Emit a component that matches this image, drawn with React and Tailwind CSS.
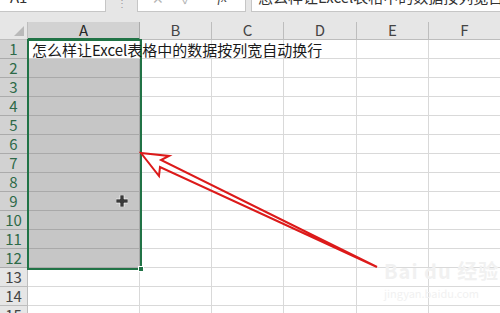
import React from 'react';

const cols = ['A', 'B', 'C', 'D', 'E', 'F'];
const rows = Array.from({ length: 15 }, (_, i) => i + 1);

const Cross = () => (
  <svg width="12" height="12" viewBox="0 0 12 12" className="absolute left-[116px] top-[195px]">
    <path d="M4 0h4v4h4v4H8v4H4V8H0V4h4z" fill="#3a3a3a" stroke="#fff" strokeWidth="0.6" />
  </svg>
);

const Arrow = () => (
  <svg width="500" height="313" className="absolute left-0 top-0 pointer-events-none">
    <path
      d="M141 153 L169 156 L161 160 L377 267 L160 167 L159 176 Z"
      fill="none"
      stroke="#dc1a1a"
      strokeWidth="2"
      strokeLinejoin="miter"
    />
  </svg>
);

const Cell = ({ r, c }) => {
  const selected = c === 'A' && r >= 2 && r <= 12;
  if (c === 'A' && r === 1) {
    return (
      <div className="relative bg-white border-r border-b border-[#d4d4d4]">
        <span className="absolute left-[4px] top-[0px] z-10 whitespace-nowrap text-[15px] leading-[19px] text-[#1a1a1a]">
          怎么样让Excel表格中的数据按列宽自动换行
        </span>
      </div>
    );
  }
  return (
    <div
      className={
        selected
          ? 'bg-[#c6c6c6] border-r border-b border-[#a9a9a9]'
          : 'bg-white border-r border-b border-[#d9d9d9]'
      }
    />
  );
};

export default function App() {
  return (
    <div className="relative w-[500px] h-[313px] overflow-hidden bg-[#e6e6e6] font-['Noto_Sans_CJK_SC','Noto_Sans',sans-serif]">
      {/* formula bar, scrolled partly out of view */}
      <div className="flex h-[12px] items-end">
        <div className="w-[106px] h-[12px] bg-white border-r border-b border-[#c6c6c6] overflow-hidden">
          <div className="-mt-[12px] pl-[10px] text-[15px] leading-[18px] text-[#333]">A1</div>
        </div>
        <div className="w-[31px] h-[12px] flex items-start justify-center text-[#9a9a9a] text-[10px] leading-[6px]">⋮</div>
        <div className="w-[109px] h-[12px] bg-white border-l border-r border-b border-[#c6c6c6] overflow-hidden flex items-start gap-[18px] pl-[14px]">
          <span className="-mt-[10px] text-[14px] text-[#b5b5b5] leading-[16px]">✕</span>
          <span className="-mt-[10px] text-[14px] text-[#b5b5b5] leading-[16px]">✓</span>
          <span className="-mt-[10px] ml-[8px] text-[13px] italic font-['Liberation_Serif',serif] text-[#444] leading-[16px]">fx</span>
        </div>
        <div className="w-[5px]" />
        <div className="flex-1 h-[12px] bg-white border-l border-b border-[#c6c6c6] overflow-hidden">
          <div className="-mt-[12px] pl-[6px] whitespace-nowrap text-[15px] leading-[18px] text-[#333]">
            怎么样让Excel表格中的数据按列宽自动换行
          </div>
        </div>
      </div>

      <div className="h-[10px]" />

      <div className="relative grid grid-cols-[28px_112px_72px_72px_73px_72px_72px] grid-rows-[18px_repeat(15,19px)]">
        {/* corner */}
        <div className="relative bg-[#e6e6e6] border-r border-b border-[#bdbdbd]">
          <svg width="10" height="10" className="absolute right-[3px] bottom-[3px]">
            <path d="M10 0 L10 10 L0 10 Z" fill="#b9b9b9" />
          </svg>
        </div>
        {cols.map((c) => (
          <div
            key={c}
            className={
              c === 'A'
                ? 'flex items-center justify-center bg-[#d2d2d2] border-r border-b-2 border-r-[#ababab] border-b-[#217346] text-[15px] text-[#262626]'
                : 'flex items-center justify-center bg-[#e6e6e6] border-r border-b border-[#bdbdbd] text-[15px] text-[#444]'
            }
          >
            {c}
          </div>
        ))}
        {rows.map((r) => (
          <React.Fragment key={r}>
            <div
              className={
                r <= 12
                  ? 'flex items-center justify-center bg-[#d2d2d2] border-r border-b border-[#ababab] text-[15px] text-[#2d6a48]'
                  : 'flex items-center justify-center bg-[#e6e6e6] border-r border-b border-[#bdbdbd] text-[15px] text-[#444]'
              }
            >
              {r}
            </div>
            {cols.map((c) => (
              <Cell key={c} r={r} c={c} />
            ))}
          </React.Fragment>
        ))}

        {/* selection outline A1:A12 */}
        <div className="absolute left-[27px] top-[17px] w-[115px] h-[231px] border-2 border-[#217346] pointer-events-none">
          <div className="absolute -right-[4px] -bottom-[4px] w-[6px] h-[6px] bg-[#217346] border border-white" />
        </div>
      </div>

      {/* watermark */}
      <div className="absolute left-[384px] top-[260px] flex flex-col items-start gap-[5px] text-[#f1f1f1] pointer-events-none">
        <span className="text-[20px] font-bold leading-[22px] tracking-[1px]">Bai du 经验</span>
        <span className="text-[11px] leading-[12px]">jingyan.baidu.com</span>
      </div>

      <Cross />
      <Arrow />
    </div>
  );
}
